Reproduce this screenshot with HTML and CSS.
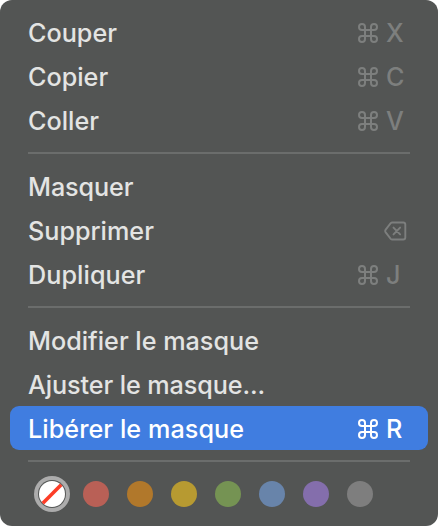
FILE: index.html
```html
<!DOCTYPE html>
<html lang="fr">
<head>
<meta charset="utf-8">
<title>Menu contextuel</title>
<link rel="stylesheet" href="styles.css">
</head>
<body>
<svg class="defs" aria-hidden="true">
  <symbol id="cmd" viewBox="0 0 20 20">
    <path d="M7 7V4A3 3 0 1 0 4 7H16A3 3 0 1 0 13 4V16A3 3 0 1 0 16 13H4A3 3 0 1 0 7 16Z" fill="none" stroke="currentColor" stroke-width="2"/>
  </symbol>
</svg>
<nav class="menu">
  <div class="item"><span class="label">Couper</span><svg class="cmd"><use href="#cmd"/></svg><span class="key">X</span></div>
  <div class="item"><span class="label">Copier</span><svg class="cmd"><use href="#cmd"/></svg><span class="key">C</span></div>
  <div class="item"><span class="label">Coller</span><svg class="cmd"><use href="#cmd"/></svg><span class="key">V</span></div>
  <hr class="separator">
  <div class="item"><span class="label snug">Masquer</span></div>
  <div class="item"><span class="label">Supprimer</span>
    <svg class="delete" viewBox="0 0 23 20" fill="none" stroke="currentColor" stroke-width="1.9" stroke-linejoin="round" stroke-linecap="round"><path d="M8.3 1.5H19.2Q21.3 1.5 21.3 3.6V16.4Q21.3 18.5 19.2 18.5H8.3Q7.4 18.5 6.7 17.8L1.7 11.4Q.7 10 1.7 8.6L6.7 2.2Q7.4 1.5 8.3 1.5Z"/><path d="M9.5 6.6L16.1 13.4M16.1 6.6L9.5 13.4"/></svg>
  </div>
  <div class="item"><span class="label loose">Dupliquer</span><svg class="cmd"><use href="#cmd"/></svg><span class="key">J</span></div>
  <hr class="separator">
  <div class="item"><span class="label">Modifier le masque</span></div>
  <div class="item"><span class="label snug">Ajuster le masque...</span></div>
  <div class="item selected"><span class="label loose">Libérer le masque</span><svg class="cmd"><use href="#cmd"/></svg><span class="key">R</span></div>
  <hr class="separator">
  <div class="swatches">
    <svg class="none" viewBox="0 0 36 36"><circle cx="18" cy="18" r="18" fill="#acacac"/><circle cx="18" cy="18" r="14" fill="#555756"/><circle cx="18" cy="18" r="13" fill="#fff"/><path d="M8.8 27.2L27.2 8.8" stroke="#fc3d27" stroke-width="3.6"/></svg>
    <span class="dot red"></span>
    <span class="dot orange"></span>
    <span class="dot yellow"></span>
    <span class="dot green"></span>
    <span class="dot blue"></span>
    <span class="dot purple"></span>
    <span class="dot gray"></span>
  </div>
</nav>
</body>
</html>
```
FILE: styles.css
```css
body { margin: 0; background: #fff; }
.defs { display: none; }
.menu {
  box-sizing: border-box;
  width: 438px;
  height: 526px;
  padding: 10px;
  border-radius: 12px;
  background: #535554;
  color: #e3e4e3;
  font: 450 25.2px/44px Inter, sans-serif;
  overflow: hidden;
}
.item {
  display: flex;
  align-items: center;
  height: 44px;
  padding: 0 18px;
  border-radius: 9px;
}
.label { flex: 1; white-space: nowrap; padding-top: 1px; height: 43px; }
.snug { letter-spacing: -0.1px; }
.loose { letter-spacing: 0.06px; }
.cmd { width: 20px; height: 20px; margin: 1px 8px 0 0; color: #7d7f7e; }
.key { width: 24px; height: 43px; padding-top: 1px; color: #7d7f7e; }
.delete { width: 23px; height: 20px; margin: 1px 3px 0 0; color: #7d7f7e; }
.selected { background: #407de0; color: #fff; }
.selected .cmd, .selected .key { color: #fff; }
.separator { height: 2px; margin: 10px 18px; border: 0; background: #6b6d6c; }
.swatches {
  display: flex;
  align-items: center;
  gap: 18px;
  height: 44px;
  padding-left: 24px;
}
.none { width: 36px; height: 36px; margin-right: -5px; }
.dot { width: 26px; height: 26px; border-radius: 50%; }
.red { background: #b96056; }
.orange { background: #b1782b; }
.yellow { background: #b79a31; }
.green { background: #759353; }
.blue { background: #6884aa; }
.purple { background: #846eac; }
.gray { background: #7e7e7e; }
```
